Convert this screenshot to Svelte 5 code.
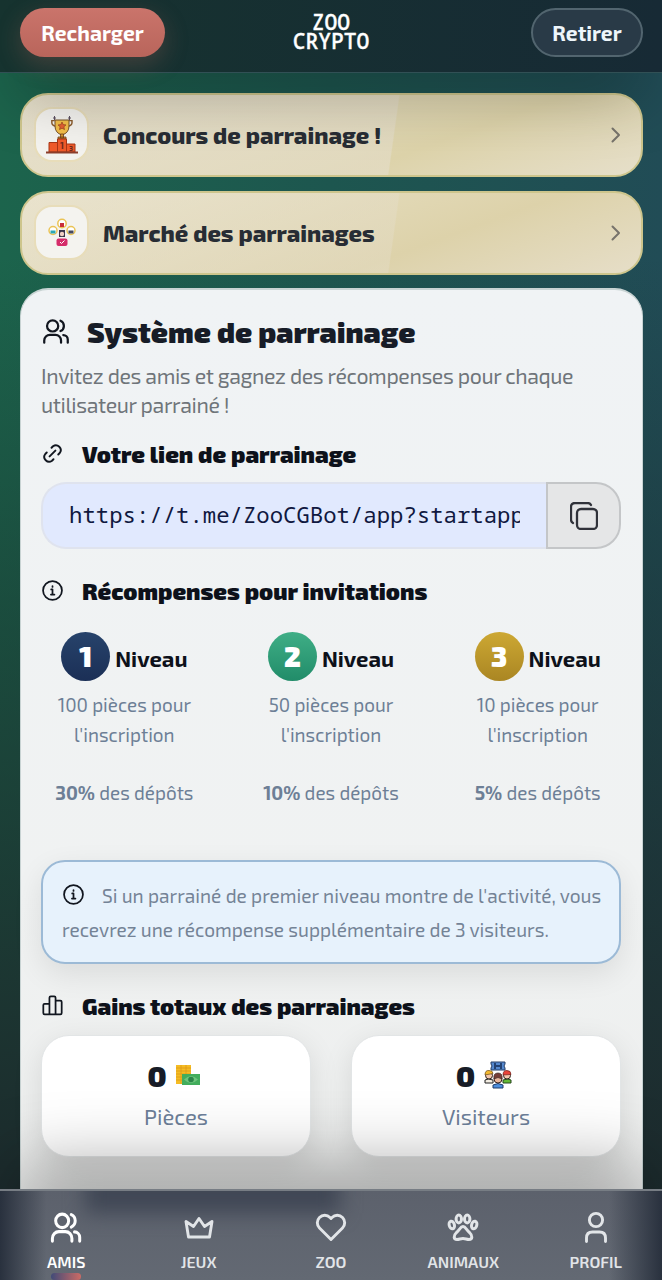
<script>
  const promos = [
    { id: 'contest', label: 'Concours de parrainage !' },
    { id: 'market', label: 'Marché des parrainages' }
  ];

  const levels = [
    { level: 1, coins: '100 pièces pour', percent: '30%' },
    { level: 2, coins: '50 pièces pour', percent: '10%' },
    { level: 3, coins: '10 pièces pour', percent: '5%' }
  ];

  const tabs = [
    { id: 'friends', label: 'AMIS' },
    { id: 'games', label: 'JEUX' },
    { id: 'zoo', label: 'ZOO' },
    { id: 'animals', label: 'ANIMAUX' },
    { id: 'profile', label: 'PROFIL' }
  ];

  let active = $state('friends');
  let link = 'https://t.me/ZooCGBot/app?startapp';
</script>

{#snippet users()}
  <circle cx="9.500" cy="7" r="5" />
  <path d="M2 22v-2a5 5 0 0 1 5-5h5a5 5 0 0 1 5 5v2M16.500 2.400a5 5 0 0 1 0 9.200M19 15.200a4 4 0 0 1 4 4V22" />
{/snippet}

{#snippet info()}
  <svg class="line-icon" viewBox="0 0 24 24">
    <circle cx="12" cy="12" r="10.800" />
    <path d="M10.500 10.800H12v5.600M10.200 16.600h4M12 7v.9" />
  </svg>
{/snippet}

<div class="page">
  <header>
    <button class="pill deposit"><span>Recharger</span></button>
    <div class="brand"><span>ZOO</span><span>CRYPTO</span></div>
    <button class="pill withdraw"><span>Retirer</span></button>
  </header>

  <main>
    {#each promos as promo}
      <a class="promo {promo.id}" href="#{promo.id}">
        <div class="promo-icon">
          {#if promo.id === 'contest'}
            <svg width="32" height="38" viewBox="0 0 32 38">
              <path d="M6 5H2v3q0 4 6 5M26 5h4v3q0 4-6 5" transform="translate(4.4 1) scale(.72)" fill="none" stroke="#8a5a2a" stroke-width="2" />
              <path d="M9 4h14v6q0 7-7 9-7-2-7-9z" fill="#f2bd48" stroke="#75502a" />
              <path d="m16 6 1.2 2.6 2.8.3-2.1 1.9.6 2.8-2.5-1.4-2.5 1.4.6-2.8L12 8.900l2.800-.3z" fill="#e45f32" stroke="#8b3a1c" stroke-width=".6" />
              <path d="M14.500 18h3v4h-3zM12 21h8v2h-8z" fill="#d6962e" stroke="#6b3c1c" stroke-width=".8" />
              <path d="M11.500 23h9v13h-9zM3 26.500h8.500V36H3zM20.500 28H29v8h-8.500z" fill="#f05a2a" stroke="#a83617" />
              <path d="M0 36.500h32" stroke="#8c3e2b" stroke-width="2" />
              <path d="M8.500 0v4M7 2h3M23.500 0v4M22 2h3" stroke="#5c5060" />
              <text x="16" y="33" class="podium">1</text>
              <text x="25" y="34.500" class="podium small">3</text>
            </svg>
          {:else}
            <svg width="28" height="30" viewBox="0 0 28 30">
              <g fill="#fff" stroke="#eac355" stroke-width="1.500">
                <circle cx="14" cy="5.500" r="4.200" />
                <circle cx="5" cy="12.500" r="4" />
                <circle cx="23" cy="12.500" r="4" />
              </g>
              <path d="M12 5h4v4h-4z" fill="#c92e3a" />
              <path d="M2.500 12.500h5v3h-5z" fill="#2ba7b4" />
              <path d="M20.500 12.500h5v3h-5z" fill="#45485f" />
              <path d="M11 12h6v7h-6z" fill="#3c354a" />
              <circle cx="14" cy="16" r="2.200" fill="#f2d1c4" />
              <rect x="8.500" y="20.500" width="11" height="7.500" rx="2" fill="#d52c6a" />
              <path d="m12 24 1.500 1.500 3-3" fill="none" stroke="#fff" />
            </svg>
          {/if}
        </div>
        <span class="promo-label">{promo.label}</span>
        <svg class="chevron" viewBox="0 0 10 16"><path d="m1.500 1.500 6.500 6.500-6.500 6.500" /></svg>
      </a>
    {/each}

    <section class="panel">
      <div class="panel-title">
        <svg class="line-icon big" viewBox="0 0 25 24">{@render users()}</svg>
        <h1>Système de parrainage</h1>
      </div>
      <p class="lead">Invitez des amis et gagnez des récompenses pour chaque<br />utilisateur parrainé !</p>

      <div class="heading">
        <svg class="line-icon" viewBox="0 0 24 24">
          <path d="m9 15 6-6M11 6l1.500-1.500a5 5 0 0 1 7 7L18 13M6 11l-1.500 1.500a5 5 0 0 0 7 7L13 18" transform="translate(-1.200 -1.200) scale(1.100)" />
        </svg>
        <h2>Votre lien de parrainage</h2>
      </div>
      <div class="field">
        <div class="link"><span>{link}</span></div>
        <button class="copy" aria-label="Copier">
          <svg viewBox="0 0 28 28">
            <rect x="7" y="7" width="20" height="20" rx="4" />
            <path d="M3 21q-2-1-2-3.500V5q0-4 4-4h12.500Q20 1 21 3" />
          </svg>
        </button>
      </div>

      <div class="heading rewards">
        {@render info()}
        <h2>Récompenses pour invitations</h2>
      </div>
      <div class="levels">
        {#each levels as item}
          <div class="level">
            <div class="level-top">
              <span class="badge b{item.level}">{item.level}</span>
              <span class="level-name">Niveau</span>
            </div>
            <p>{item.coins}<br />l'inscription</p>
            <p><b>{item.percent}</b> des dépôts</p>
          </div>
        {/each}
      </div>

      <div class="note">
        {@render info()}Si un parrainé de premier niveau montre de l'activité, vous<br />
        recevrez une récompense supplémentaire de 3 visiteurs.
      </div>

      <div class="heading gains">
        <svg class="line-icon" viewBox="0 0 24 24">
          <path d="M8.500 22V3q0-1.500 1.500-1.500h4q1.500 0 1.500 1.500v19M8.500 10H3q-1.500 0-1.500 1.500v9Q1.500 22 3 22h18q1.500 0 1.500-1.500V8q0-1.500-1.500-1.500h-5.500" />
        </svg>
        <h2>Gains totaux des parrainages</h2>
      </div>
      <div class="stats">
        <div class="stat">
          <div class="value">
            0
            <svg width="25" height="28" viewBox="0 0 25 28">
              <path d="M0 4h15v19H0z" fill="#f5bc24" />
              <path d="M0 7h15M0 10h15M0 13h15M0 16h15M0 19h15M5 4v19M10 4v19" stroke="#dd9b18" stroke-width=".8" />
              <path d="M6 13h18v11H6z" fill="#42ad5c" />
              <path d="M8 18.500q7-7 14 0-7 7-14 0z" fill="#6dc47c" />
              <circle cx="15" cy="18.500" r="2.800" fill="#2b8549" />
            </svg>
          </div>
          <span class="stat-name">Pièces</span>
        </div>
        <div class="stat">
          <div class="value">
            0
            <svg width="28" height="28" viewBox="0 0 28 28">
              <path d="M7 1h14v2l-1 2 1 2v2H7V7l1-2-1-2z" fill="#5589d0" stroke="#263e66" />
              <path d="M11 2v6M17 2v6M12 5h4" stroke="#142b53" stroke-width="1.500" />
              <path d="M1 22v-3q3-2 8 0v3z" fill="#f4eee3" stroke="#222" />
              <path d="M19 22v-3q5-2 8 0v3z" fill="#65bb35" stroke="#29471f" />
              <circle cx="5" cy="14.500" r="3.500" fill="#f4c7ad" stroke="#33261f" />
              <circle cx="23" cy="14.500" r="3.500" fill="#f4c7ad" stroke="#33261f" />
              <path d="M1 14q0-5 4-4.500 4 0 4 3z" fill="#f4b92e" stroke="#6c4b18" stroke-width=".7" />
              <path d="M19 14q0-5 4-4.500 4 0 4 4z" fill="#e94438" stroke="#6e231c" stroke-width=".7" />
              <path d="M9 27v-3q5-3 10 0v3z" fill="#4c8ede" stroke="#1e3d6b" />
              <circle cx="14" cy="18" r="4" fill="#eab79d" stroke="#3b2520" />
              <path d="M10 18q-1-6 4-6t4 6q-4-3-8 0z" fill="#763e37" stroke="#3b2520" stroke-width=".7" />
            </svg>
          </div>
          <span class="stat-name">Visiteurs</span>
        </div>
      </div>
    </section>
  </main>

  <nav>
    {#each tabs as tab}
      <button class="tab" class:active={active === tab.id} onclick={() => (active = tab.id)}>
        <svg viewBox="0 0 32 32">
          {#if tab.id === 'friends'}
            <g transform="translate(-.2 .4) scale(1.300 1.350)" stroke-width="2.300">{@render users()}</g>
          {:else if tab.id === 'games'}
            <path d="M5.500 26h21l2.500-15.500-7.500 5L16 7.500l-5.500 8-7.500-5z" />
          {:else if tab.id === 'zoo'}
            <path d="M16 28.500 4.500 17a7.400 7.400 0 0 1 0-10.500 7.400 7.400 0 0 1 10.500 0l1 1 1-1a7.400 7.400 0 0 1 10.500 0 7.400 7.400 0 0 1 0 10.500z" />
          {:else if tab.id === 'animals'}
            <g stroke-width="3">
              <ellipse cx="11.800" cy="8" rx="2.700" ry="3.900" />
              <ellipse cx="20.200" cy="8" rx="2.700" ry="3.900" />
              <ellipse cx="4.800" cy="14" rx="2.600" ry="3.900" transform="rotate(-15 4.800 14)" />
              <ellipse cx="27.200" cy="14" rx="2.600" ry="3.900" transform="rotate(15 27.200 14)" />
              <path d="M16 15.500c2.500 0 3.500 3.500 6.500 6 3.300 3 3 7-.5 7-2.300 0-3.600-1-6-1s-3.700 1-6 1c-3.500 0-3.800-4-.5-7 3-2.500 4-6 6.500-6z" />
            </g>
          {:else}
            <circle cx="16" cy="9" r="6.600" />
            <path d="M6.500 30.500V27q0-6 6-6h7q6 0 6 6v3.500" />
          {/if}
        </svg>
        <span>{tab.label}</span>
      </button>
    {/each}
  </nav>
</div>

<style>
  :global(body) {
    margin: 0;
    background: #1c2b2b;
  }

  .page {
    display: flex;
    flex-direction: column;
    height: 1280px;
    overflow: hidden;
    font-family: "Exo 2", "Open Sans", "Noto Sans", sans-serif;
    background:
      linear-gradient(to bottom, transparent 0 20%, rgba(24, 42, 41, 0.4) 47%, rgba(28, 42, 43, 0.8) 77%, #1c2a2c 94%),
      linear-gradient(to right, #1c644c, #1d564f 50%, #214c56);
  }

  button {
    font: inherit;
    border: 0;
    padding: 0;
    margin: 0;
    cursor: pointer;
  }

  h1, h2, p {
    margin: 0;
  }

  svg {
    display: block;
    flex: none;
  }

  /* Top bar */
  header {
    position: relative;
    z-index: 2;
    display: grid;
    grid-template-columns: 1fr auto 1fr;
    align-items: start;
    box-sizing: border-box;
    height: 73px;
    padding: 8px 19px 0 20px;
    background: linear-gradient(to right, #16332f, #172a35);
    border-bottom: 1px solid #315055;
    box-shadow: 0 32px 66px -18px rgba(0, 0, 0, 0.4);
    flex: none;
  }

  .pill {
    box-sizing: border-box;
    height: 49px;
    border-radius: 25px;
    font-size: 21px;
    font-weight: 700;
    color: #fff;
    white-space: nowrap;
  }

  .deposit {
    width: 145px;
    background: linear-gradient(#ca746b, #b9655b);
    box-shadow: 0 8px 24px rgba(200, 110, 95, 0.25);
  }

  .withdraw {
    justify-self: end;
    width: 112px;
    background: #293a47;
    border: 2px solid #52656f;
    color: #eef6fb;
  }

  .brand {
    display: flex;
    flex-direction: column;
    align-items: center;
    padding: 5px 1px 0 0;
    font-family: "Noto Sans Mono", "DejaVu Sans Mono", monospace;
    font-size: 21.300px;
    font-weight: 500;
    line-height: 18.500px;
    color: #fff;
    -webkit-text-stroke: 0.4px #fff;
  }

  /* Promo links */
  main {
    flex: 1;
    min-height: 0;
    overflow: hidden;
    display: flex;
    flex-direction: column;
    gap: 14px;
    padding: 20px 19px 0 20px;
  }

  .promo {
    display: flex;
    align-items: center;
    flex: none;
    box-sizing: border-box;
    height: 84px;
    padding: 0 20px 0 14px;
    border: 2px solid #cdc58c;
    border-radius: 28px;
    text-decoration: none;
    color: #282d34;
    background:
      linear-gradient(98deg, rgba(229, 222, 203, 0.6) 59.800%, transparent 60%),
      linear-gradient(160deg, #e9e3cd, #ddd3aa 65%, #e6dfca);
  }

  .market {
    background:
      linear-gradient(98deg, rgba(229, 222, 203, 0.4) 59.800%, transparent 60%),
      linear-gradient(160deg, #ece6cf, #ddd2aa 65%, #e6dec8);
  }

  .promo-icon {
    display: flex;
    align-items: center;
    justify-content: center;
    box-sizing: border-box;
    width: 55px;
    height: 55px;
    margin: 0 0 1px -2px;
    border: 2px solid #e8ddba;
    border-radius: 18px;
    background: #f4f3ef;
  }

  .podium {
    font-size: 9px;
    font-weight: 700;
    text-anchor: middle;
    fill: #6f2a1e;
  }

  .small {
    font-size: 7px;
  }

  .promo-label {
    flex: 1;
    margin-left: 14px;
    font-size: 23.300px;
    font-weight: 800;
    white-space: nowrap;
  }

  .chevron {
    width: 10px;
    height: 16px;
    fill: none;
    stroke: #77736b;
    stroke-width: 2;
    stroke-linecap: round;
    stroke-linejoin: round;
  }

  /* White panel */
  .panel {
    flex: none;
    box-sizing: border-box;
    height: 1000px;
    margin-top: -1px;
    padding: 21px 21px 0 20px;
    border: 2px solid #c8d3d3;
    border-width: 2px 1px;
    border-radius: 28px;
    background: linear-gradient(#f0f3f5, #f0f2f2 60%, #ecedec);
  }

  .panel-title {
    display: flex;
    align-items: center;
    height: 42px;
  }

  .line-icon {
    width: 21px;
    height: 21px;
    fill: none;
    stroke: #11161f;
    stroke-width: 2;
    stroke-linecap: round;
    stroke-linejoin: round;
  }

  .big {
    width: 28px;
    height: 27px;
    margin: 0 17px 1px 1px;
  }

  h1 {
    font-size: 29.100px;
    line-height: 42px;
    font-weight: 900;
    color: #171c27;
    white-space: nowrap;
  }

  .lead {
    margin-top: 8px;
    font-size: 21.300px;
    line-height: 29px;
    letter-spacing: -0.38px;
    color: #6f757a;
    white-space: nowrap;
  }

  .heading {
    display: flex;
    align-items: center;
    height: 32px;
    margin-top: 19px;
  }

  .heading .line-icon {
    margin: 0 19px 2px 1px;
  }

  h2 {
    font-size: 23.200px;
    line-height: 32px;
    font-weight: 900;
    color: #0d111a;
    white-space: nowrap;
  }

  .field {
    display: flex;
    height: 67px;
    margin-top: 12px;
  }

  .link {
    flex: 1;
    min-width: 0;
    display: flex;
    align-items: center;
    box-sizing: border-box;
    padding: 0 26px 3px 26px;
    border: 2px solid #dfe3ee;
    border-right: 0;
    border-radius: 25px 0 0 25px;
    background: #e1e9fe;
    font-family: "Noto Sans Mono", "DejaVu Sans Mono", monospace;
    font-size: 22.300px;
    color: #101840;
  }

  .link span {
    overflow: hidden;
    white-space: nowrap;
  }

  .copy {
    display: flex;
    align-items: center;
    justify-content: center;
    box-sizing: border-box;
    width: 75px;
    border: 2px solid #c4c6c8;
    border-radius: 0 25px 25px 0;
    background: #e5e6e7;
  }

  .copy svg {
    width: 28px;
    height: 28px;
    fill: none;
    stroke: #30323a;
    stroke-width: 2.300;
    stroke-linecap: round;
  }

  .rewards {
    margin-top: 26px;
  }

  /* Levels */
  .levels {
    display: grid;
    grid-template-columns: repeat(3, 1fr);
    gap: 40px;
    margin-top: 25px;
    height: 228px;
  }

  .level {
    text-align: center;
  }

  .level-top {
    display: flex;
    justify-content: center;
    gap: 5px;
    height: 49px;
    margin-bottom: 9px;
  }

  .badge {
    width: 49px;
    height: 49px;
    border-radius: 50%;
    font-size: 28px;
    line-height: 49px;
    font-weight: 900;
    color: #fff;
  }

  .b1 {
    background: linear-gradient(#27436b, #1b2f56);
  }

  .b2 {
    background: linear-gradient(#3fae86, #218c69);
  }

  .b3 {
    background: linear-gradient(#cda833, #aa8623);
  }

  .level-name {
    font-size: 22px;
    line-height: 53px;
    font-weight: 700;
    color: #0d111a;
  }

  .level p {
    margin-bottom: 29px;
    font-size: 18.900px;
    line-height: 29.500px;
    color: #6d7f96;
    white-space: nowrap;
  }

  .note {
    box-sizing: border-box;
    height: 104px;
    padding: 17px 19px;
    border: 2px solid #9cbad6;
    border-radius: 24px;
    background: #e7f2fc;
    box-shadow: 0 10px 30px rgba(0, 0, 0, 0.09);
    font-size: 19.100px;
    line-height: 34px;
    color: #748396;
    white-space: nowrap;
  }

  .note .line-icon {
    display: inline-block;
    margin: 0 18px 0 1px;
    vertical-align: -2px;
  }

  .gains {
    margin-top: 26px;
  }

  .stats {
    display: grid;
    grid-template-columns: 1fr 1fr;
    gap: 40px;
    margin-top: 13px;
  }

  .stat {
    display: flex;
    flex-direction: column;
    align-items: center;
    box-sizing: border-box;
    height: 122px;
    padding-top: 21px;
    border: 1px solid #e2e5e6;
    border-radius: 28px;
    background: #fff;
    box-shadow: 0 8px 30px rgba(0, 0, 0, 0.1);
  }

  .value {
    display: flex;
    align-items: center;
    gap: 9px;
    height: 36px;
    margin-left: -4px;
    font-size: 29px;
    font-weight: 900;
    color: #171c27;
  }

  .stat-name {
    margin-top: 7px;
    font-size: 22px;
    line-height: 32px;
    color: #6d7f99;
  }

  /* Bottom tabs */
  nav {
    position: relative;
    z-index: 2;
    flex: none;
    display: grid;
    grid-template-columns: repeat(5, 1fr);
    box-sizing: border-box;
    height: 91px;
    overflow: hidden;
    border-top: 2px solid #777d84;
    background:
      linear-gradient(to right, #29313e, rgba(41, 49, 62, 0) 7%, rgba(41, 49, 62, 0) 92%, #29313e),
      linear-gradient(#5c616c, #636973);
    box-shadow: 0 -34px 72px -16px rgba(0, 0, 0, 0.42);
  }

  /* the next card, seen through the frosted bar */
  nav::before {
    content: "";
    position: absolute;
    top: -20px;
    left: 85px;
    width: 255px;
    height: 42px;
    background: #404755;
    filter: blur(10px);
  }

  .tab {
    position: relative;
    display: flex;
    flex-direction: column;
    align-items: center;
    padding-top: 20px;
    background: none;
    color: #e2e5e8;
    font-size: 16px;
    line-height: 20px;
    font-weight: 600;
  }

  .tab svg {
    width: 32px;
    height: 32px;
    margin-bottom: 9px;
    fill: none;
    stroke: currentColor;
    stroke-width: 2.900;
    stroke-linecap: round;
    stroke-linejoin: round;
  }

  .active {
    color: #fff;
  }

  .active::after {
    content: "";
    position: absolute;
    bottom: 0;
    left: 51px;
    width: 30px;
    height: 7px;
    border-radius: 4px;
    background: linear-gradient(to right, #414b78, #cc6b65);
  }
</style>
